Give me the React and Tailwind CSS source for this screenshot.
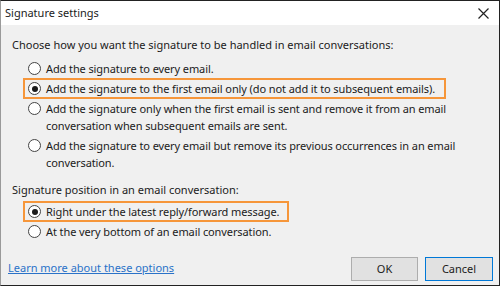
import React from "react";

function Radio({ checked }) {
  return (
    <span className="flex h-[13px] w-[13px] shrink-0 items-center justify-center rounded-full border border-[#444] bg-white">
      {checked && <span className="h-[6px] w-[6px] rounded-full bg-[#1a1a1a]" />}
    </span>
  );
}

function Option({ checked, lines, highlight, w }) {
  return (
    <div
      className={
        "flex items-start gap-[5px] whitespace-nowrap " +
        (highlight
          ? "-ml-[5px] -mb-[1px] border-2 border-[#f6963a] pl-[3px] " + w
          : "py-[1.5px]")
      }
    >
      <span className="mt-[2px]">
        <Radio checked={checked} />
      </span>
      <div className="leading-[17px] tracking-[-0.1px]">
        {lines.map((l, i) => (
          <div key={i}>{l}</div>
        ))}
      </div>
    </div>
  );
}

export default function App() {
  return (
    <div
      className="flex h-[286px] w-[500px] flex-col border-t border-r border-b border-l border-t-[#222] border-r-[#222] border-b-[#222] border-l-[#9a9a9a] bg-[#f0f0f0] text-[11px] text-[#1b1b1b]"
      style={{ fontFamily: '"Noto Sans", "Open Sans", sans-serif' }}
    >
      <div className="flex h-[24px] items-center justify-between bg-white pl-[4px] pr-[10px]">
        <span className="text-[11px]">Signature settings</span>
        <svg width="11" height="11" viewBox="0 0 11 11">
          <path d="M0.5 0.5L10.5 10.5M10.5 0.5L0.5 10.5" stroke="#222" strokeWidth="1.2" />
        </svg>
      </div>
      <div className="flex flex-1 flex-col pl-[11px] pr-[6px]">
        <div className="mt-[11px] whitespace-nowrap leading-[17px]">
          Choose how you want the signature to be handled in email conversations:
        </div>
        <div className="ml-[16px] mt-[5px] flex flex-col">
          <Option lines={["Add the signature to every email."]} />
          <Option
            checked
            highlight
            w="w-[423px]"
            lines={["Add the signature to the first email only (do not add it to subsequent emails)."]}
          />
          <Option
            lines={[
              "Add the signature only when the first email is sent and remove it from an email",
              "conversation when subsequent emails are sent.",
            ]}
          />
          <Option
            lines={[
              "Add the signature to every email but remove its previous occurrences in an email",
              "conversation.",
            ]}
          />
        </div>
        <div className="mt-[9px] whitespace-nowrap leading-[17px]">Signature position in an email conversation:</div>
        <div className="ml-[16px] mt-[3px] flex flex-col">
          <Option checked highlight w="w-[266px]" lines={["Right under the latest reply/forward message."]} />
          <Option lines={["At the very bottom of an email conversation."]} />
        </div>
        <div className="mt-auto mb-[4px] flex items-end justify-between">
          <a href="#" className="-ml-[4px] mb-[5px] text-[#2a72c8] underline">
            Learn more about these options
          </a>
          <div className="flex gap-[7px]">
            <button className="h-[24px] w-[67px] border border-[#adadad] bg-[#e1e1e1] text-[11px]">OK</button>
            <button className="h-[24px] w-[68px] border border-[#0078d7] bg-[#e1e1e1] text-[11px]">Cancel</button>
          </div>
        </div>
      </div>
    </div>
  );
}
